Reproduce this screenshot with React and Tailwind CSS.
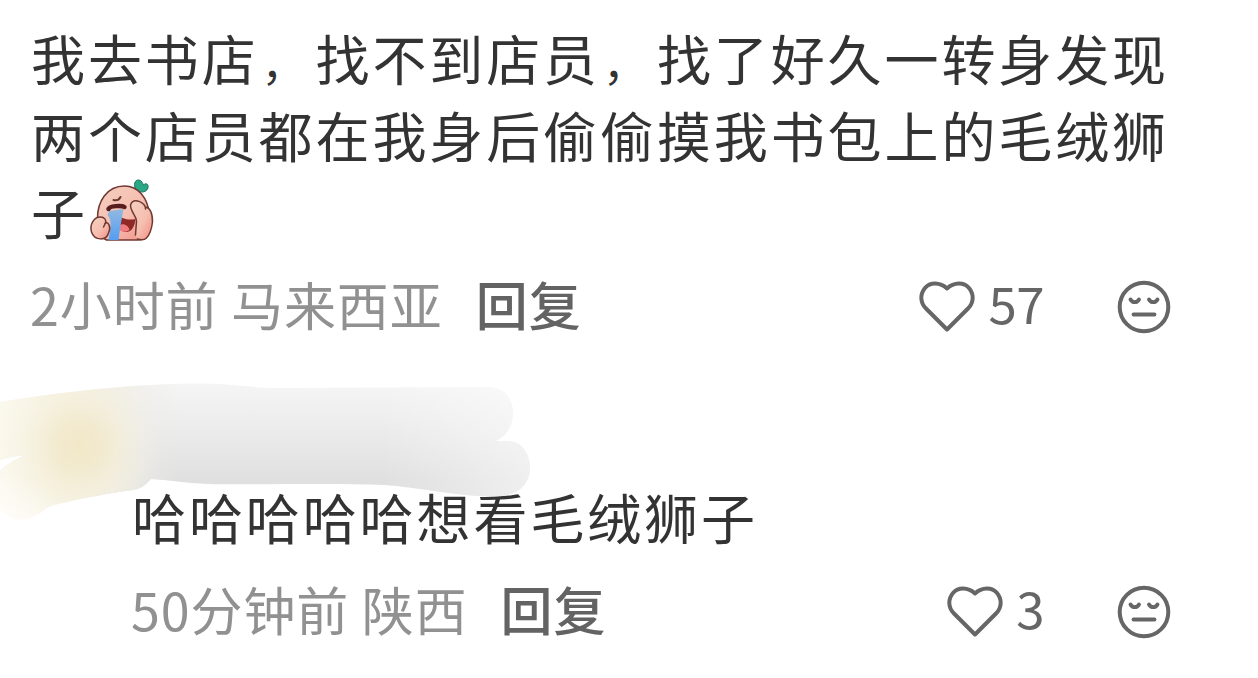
import React from 'react';

const comments = [
  {
    id: 1,
    lines: ['我去书店，找不到店员，找了好久一转身发现', '两个店员都在我身后偷偷摸我书包上的毛绒狮', '子'],
    emoji: true,
    time: '2小时前',
    place: '马来西亚',
    likes: 57,
  },
  {
    id: 2,
    lines: ['哈哈哈哈哈想看毛绒狮子'],
    time: '50分钟前',
    place: '陕西',
    likes: 3,
  },
];

function Heart() {
  return (
    <svg className="mt-[2px] h-[54px] w-[58px] shrink-0" viewBox="0 0 58 54" fill="none" stroke="#666" strokeWidth="4" strokeLinejoin="round">
      <path d="M29 8.5C22 2 12 2 7 8C2 14 2 22 7.500 28L29 49.500L50.500 28C56 22 56 14 51 8C46 2 36 2 29 8.5Z" />
    </svg>
  );
}

function Face() {
  return (
    <svg className="mt-[2px] h-[54px] w-[54px] shrink-0" viewBox="0 0 54 54" fill="none" stroke="#666" strokeWidth="4" strokeLinecap="round">
      <circle cx="27" cy="27" r="24.3" />
      <path d="M13.5 19.5C15.5 23 20 23 22 19.5M32 19.5C34 23 38.5 23 40.5 19.5M16.5 34.5H37.5" strokeWidth="3.9" />
    </svg>
  );
}

function CryingEmoji() {
  return (
    <svg className="-mt-[3px] ml-[1px] h-[64px] w-[67px]" viewBox="0 0 66 64">
      <defs>
        <linearGradient id="skin" x1="0" y1="0" x2="1" y2="1">
          <stop offset="0" stopColor="#f5cfc0" />
          <stop offset="0.55" stopColor="#f5bfb1" />
          <stop offset="1" stopColor="#f28c80" />
        </linearGradient>
        <linearGradient id="tear" x1="0" y1="0" x2="0" y2="1">
          <stop offset="0" stopColor="#92b9e0" />
          <stop offset="1" stopColor="#539ef3" />
        </linearGradient>
      </defs>
      <path d="M46 11C44 7 45 2 49 2C52 2 53 5 54 7C57 4 60 7 58 11C56 15 50 15 46 11Z" fill="#2ba785" stroke="#17795f" strokeWidth="1" />
      <path d="M8 40C8 24 17 8 35 8C49 8 58 20 60 36C63 50 59 62 48 62H17C9 58 7 50 8 40Z" fill="url(#skin)" stroke="#713832" strokeWidth="1.5" />
      <path d="M31 39C37 42 41 42 46 41C45 49 42 55 35 54C31 53 29 49 31 39Z" fill="#8e2927" />
      <path d="M30 47C35 45 39 48 40 52C36 55 31 54 29 51Z" fill="#f27b80" />
      <path d="M20 33L34 31C32 42 30 53 29 62H19C21 52 23 42 18 37Z" fill="url(#tear)" />
      <path d="M19 31C20 28 32 27 35 29" stroke="#591d20" strokeWidth="4.5" strokeLinecap="round" fill="none" />
      <path d="M24 22C28 23 30 21 31 19" stroke="#713832" strokeWidth="2" strokeLinecap="round" fill="none" />
      <path d="M42 31C40 24 46 21 52 24C54 25 56 27 56 29C61 30 63 37 63 44C62 52 60 57 57 60C53 64 46 61 46 56L47 41C45 38 43 35 42 31Z" fill="url(#skin)" />
      <path d="M56 31C57 25 43 18 41 27C41 34 47 38 47 43L46 57M56 29C61 30 63 37 63 44C62 52 60 57 57 60C55 62 51 62 48 61" stroke="#713832" strokeWidth="1.5" strokeLinecap="round" fill="none" />
      <path d="M11 39C4 39 0 47 2 54C5 63 17 63 19 55C22 49 19 44 16 45C17 42 15 39 11 39Z" fill="url(#skin)" stroke="#713832" strokeWidth="1.5" />
      <path d="M16 45L14 49" stroke="#713832" strokeWidth="1.5" strokeLinecap="round" />
    </svg>
  );
}

// brush strokes hiding the name and avatar of the second commenter
function BrushedName() {
  return (
    <svg className="absolute left-0 top-[370px] h-[180px] w-[560px]" viewBox="0 0 560 180">
      <defs>
        <linearGradient id="grey" x1="0" y1="0" x2="0" y2="1">
          <stop offset="0" stopColor="#f5f5f5" />
          <stop offset="0.4" stopColor="#ececec" />
          <stop offset="0.85" stopColor="#e0e0e0" />
          <stop offset="1" stopColor="#dfdfdf" />
        </linearGradient>
        <linearGradient id="fadeRight" x1="0" x2="1">
          <stop offset="0.68" stopColor="#fff" stopOpacity="0" />
          <stop offset="0.95" stopColor="#fff" stopOpacity="0.5" />
        </linearGradient>
        <linearGradient id="cream" x1="0" x2="1">
          <stop offset="0" stopColor="#fbf8ec" />
          <stop offset="0.13" stopColor="#f6f2e3" />
          <stop offset="0.2" stopColor="#f2efe4" stopOpacity="0.95" />
          <stop offset="0.32" stopColor="#ebebe9" stopOpacity="0" />
        </linearGradient>
        <radialGradient id="gold" gradientUnits="userSpaceOnUse" cx="79" cy="76" r="80">
          <stop offset="0" stopColor="#f2e8c8" />
          <stop offset="0.3" stopColor="#f2e9cc" stopOpacity="0.85" />
          <stop offset="0.65" stopColor="#f4eed8" stopOpacity="0.4" />
          <stop offset="1" stopColor="#f6f2e2" stopOpacity="0" />
        </radialGradient>
        <linearGradient id="tail" gradientUnits="userSpaceOnUse" x1="40" y1="115" x2="15" y2="158">
          <stop offset="0" stopColor="#fff" stopOpacity="0" />
          <stop offset="1" stopColor="#fff" stopOpacity="0.7" />
        </linearGradient>
        <clipPath id="brush">
          <path d="M0 32C60 22 140 13 205 13.5C235 14 250 18 280 18L488 17C505 17 513 29 513 43C513 56 507 65 496 71H509C523 72 530 85 530 98C530 113 519 125 500 126C465 128 425 118 385 115C330 113 260 115 208 114C185 113 168 110 151 109C145 116 140 119 133 120C110 123 75 129 48 137C37 147 24 152 12 148L0 140V101C7 94 16 89 26 85C16 86 8 87 0 90Z" />
        </clipPath>
      </defs>
      <g clipPath="url(#brush)">
        <rect y="13" width="560" height="114" fill="url(#grey)" />
        <rect y="10" width="560" height="118" fill="url(#fadeRight)" />
        <rect width="560" height="180" fill="url(#cream)" />
        <rect width="170" height="180" fill="url(#gold)" />
        <rect width="150" height="180" fill="url(#tail)" />
      </g>
    </svg>
  );
}

function Meta({ comment }) {
  return (
    <div className="flex h-[60px] items-center text-[52px] leading-[60px]">
      <span className="-mt-[4px] font-normal tracking-[0.9px] whitespace-nowrap text-[#919191]">{comment.time} {comment.place}</span>
      <span className="-mt-[4px] ml-[33px] font-medium tracking-[1px] text-[#636363]">回复</span>
      <div className="ml-auto flex items-center">
        <Heart />
        <span className="-mt-[9px] ml-[12px] text-[51px] font-normal text-[#666] tracking-[-0.5px]">{comment.likes}</span>
      </div>
      <div className="ml-[73px] flex"><Face /></div>
    </div>
  );
}

// full-width commas are drawn a little smaller than the characters around them
function Line({ text }) {
  return text.split('，').map((part, i) => (
    <React.Fragment key={i}>
      {i > 0 && <span className="inline-block w-[56.9px] pl-[3px] text-[44px] leading-none tracking-normal">，</span>}
      {part}
    </React.Fragment>
  ));
}

export default function App() {
  const [main, reply] = comments;

  return (
    <div className="relative h-[678px] w-[1258px] overflow-hidden bg-white font-['Noto_Sans_CJK_SC',sans-serif]">
      <div className="pl-[31px] pr-[87px] pt-[19px]">
        <div className="text-[54px] leading-[77px] tracking-[2.9px] text-[#333]">
          {main.lines.map(line => (
            <div key={line} className="flex h-[77px] items-center whitespace-nowrap">
              <span><Line text={line} /></span>
              {main.emoji && line === '子' && <CryingEmoji />}
            </div>
          ))}
        </div>
        <div className="-ml-[1px] mt-[26px]"><Meta comment={main} /></div>
      </div>

      <div className="pl-[132px] pr-[87px] pt-[142px]">
        <p className="h-[77px] text-[54px] leading-[77px] tracking-[2.9px] text-[#333] whitespace-nowrap">{reply.lines[0]}</p>
        <div className="-ml-[1px] mt-[26px]"><Meta comment={reply} /></div>
      </div>

      <BrushedName />
    </div>
  );
}
